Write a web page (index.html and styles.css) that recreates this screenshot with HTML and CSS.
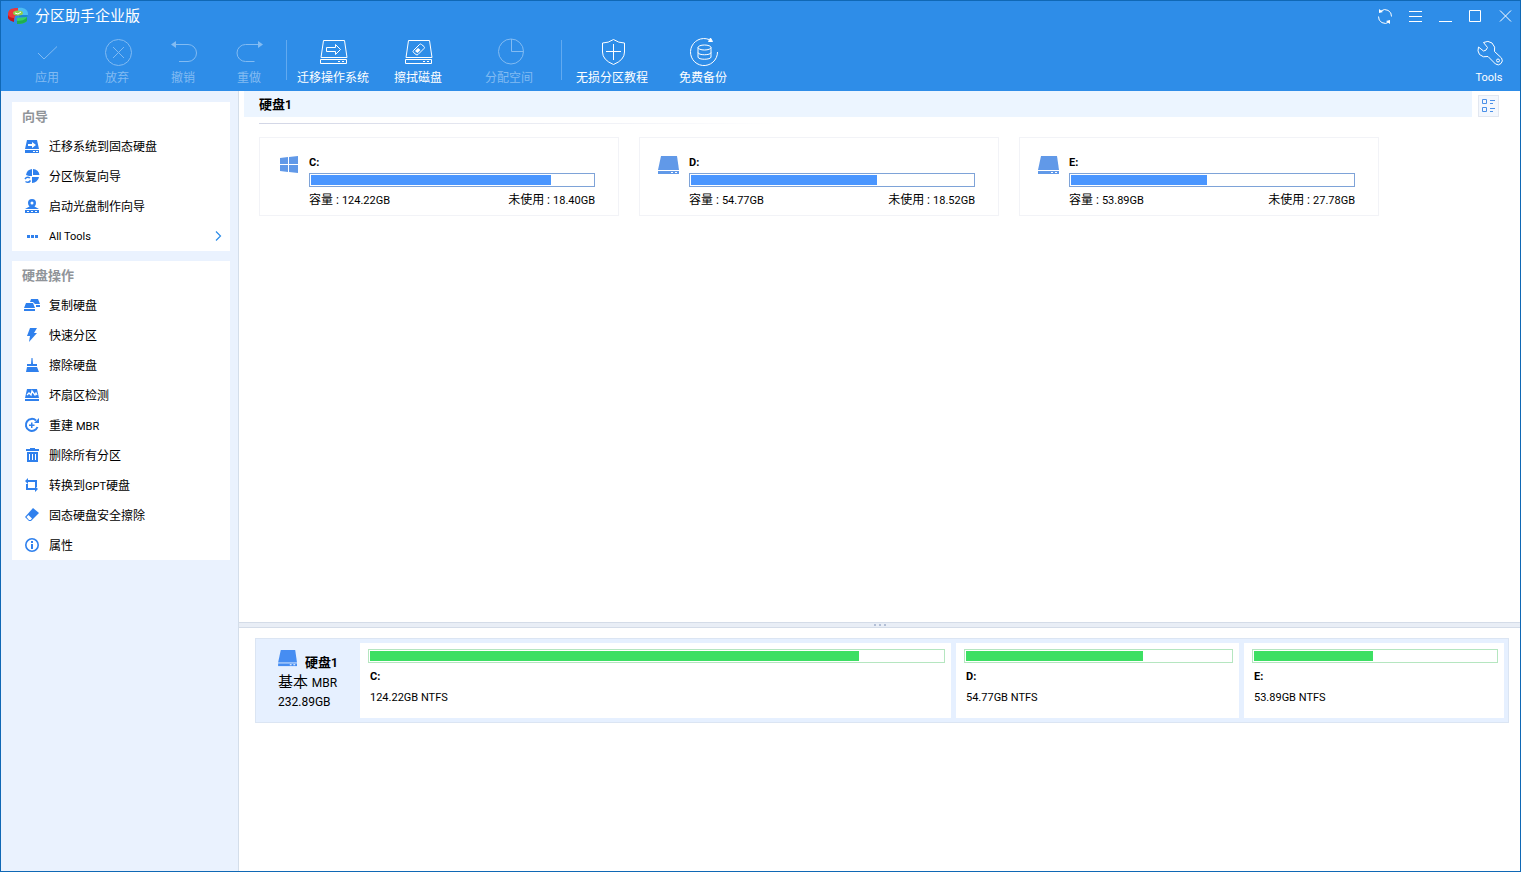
FILE: index.html
```html
<!DOCTYPE html>
<html lang="zh-CN">
<head>
<meta charset="utf-8">
<title>分区助手企业版</title>
<link rel="stylesheet" href="styles.css">
</head>
<body>
<svg class="defs" width="0" height="0" aria-hidden="true">
  <symbol id="drive" viewBox="0 0 22 20">
    <path d="M3 1h16l2 14H0z" fill="currentColor"/>
    <path d="M0 16h21v3H0z" fill="currentColor"/>
    <path d="M13 17h2v1h-2zM17 17h2v1h-2z" fill="#fff"/>
  </symbol>
</svg>
<div class="window">
  <header class="header">
    <div class="titlebar">
      <svg class="logo" width="22" height="18" viewBox="0 0 22 18">
        <path d="M11 1C17 0 21 3 21 7v2l-10-1z" fill="#4cbcf2"/>
        <path d="M12 8l9 0c0 1-1 2-2 2l-7 0z" fill="#1e86d0"/>
        <path d="M10 1C4 1 1 3 1 7v4c1 2 4 3 6 3l1-5 3-1V1z" fill="#e8383c"/>
        <path d="M1 8c1 2 3 3 6 3v4c-3-1-5-2-6-4z" fill="#c2141c"/>
        <path d="M10 11l10-1v4c-2 2-5 3-8 3h-2z" fill="#35d06a"/>
        <path d="M10 14c4 0 8-1 10-4v4c-2 2-5 3-10 3z" fill="#1fae50"/>
        <ellipse cx="11" cy="6" rx="5" ry="2.500" fill="#8fd14a"/>
        <path d="M8 6l3 1 3-2" fill="none" stroke="#fff"/>
      </svg>
      <h1 class="app-name">分区助手企业版</h1>
      <div class="window-controls">
        <button class="wc" aria-label="刷新"><svg width="16" height="16" viewBox="0 0 16 16"><g fill="none" stroke="#fff"><path d="M4 3a6.500 6.500 0 0 1 10.500 5.500"/><path d="M12 14A6.500 6.500 0 0 1 1.500 8.500"/></g><path d="M2 1l0 4 4-1zM13 16l0-4-4 1z" fill="#fff"/></svg></button>
        <button class="wc" aria-label="菜单"><svg width="14" height="14" viewBox="0 0 14 14"><path d="M1 2.500h13M1 7.500h13M1 12.500h13" stroke="#fff"/></svg></button>
        <button class="wc" aria-label="最小化"><svg width="14" height="14" viewBox="0 0 14 14"><path d="M1 12.500h13" stroke="#fff"/></svg></button>
        <button class="wc" aria-label="最大化"><svg width="14" height="14" viewBox="0 0 14 14"><path d="M1.500 1.500h11v11h-11z" fill="none" stroke="#fff"/></svg></button>
        <button class="wc" aria-label="关闭"><svg width="14" height="14" viewBox="0 0 14 14"><path d="M2 1.500l11 11M13 1.500l-11 11" stroke="#fff"/></svg></button>
      </div>
    </div>
    <nav class="toolbar">
      <button class="tool tool-first" disabled><svg width="30" height="30" viewBox="0 0 30 30"><path d="M6 16l6 6L25 9.500"/></svg><span>应用</span></button>
      <button class="tool tool-s" disabled><svg width="30" height="30" viewBox="0 0 30 30"><circle cx="16.500" cy="15.500" r="13"/><path d="M11 10l11 11M22 10l-11 11"/></svg><span>放弃</span></button>
      <button class="tool tool-s" disabled><svg width="30" height="30" viewBox="0 0 30 30"><path d="M6 7.500h14a8.500 8.500 0 0 1 0 17h-9"/><path d="M8 4v7L3 7.500z" fill="currentColor" stroke="none"/></svg><span>撤销</span></button>
      <button class="tool tool-s" disabled><svg width="30" height="30" viewBox="0 0 30 30"><path d="M25 7.500H11.500a8.500 8.500 0 0 0 0 17h9"/><path d="M24 4v7l5-3.500z" fill="currentColor" stroke="none"/></svg><span>重做</span></button>
      <i class="sep sep-gap"></i>
      <button class="tool tool-os"><svg width="30" height="30" viewBox="0 0 30 30"><path d="M5.500 3.500h21l2.500 17H3z"/><path d="M2.500 22.500h26v4h-26zM20 24.500h2M24 24.500h2"/><path d="M8.500 10.500h9v-3l5 5-5 5v-3h-9z"/></svg><span>迁移操作系统</span></button>
      <button class="tool tool-wipe"><svg width="30" height="30" viewBox="0 0 30 30"><path d="M5.500 3.500h21l2.500 17H3z"/><path d="M2.500 22.500h26v4h-26zM20 24.500h2M24 24.500h2"/><path d="M16.500 7.500q1-1 2 0l2.500 2q1 1 0 2l-6 6q-1 1-2 0l-2.500-2q-1-1 0-2z"/><path d="M15 11l2.500 2-3 3-2.500-2z" fill="currentColor" stroke="none"/></svg><span>擦拭磁盘</span></button>
      <button class="tool tool-alloc" disabled><svg width="30" height="30" viewBox="0 0 30 30"><circle cx="17" cy="14.500" r="12.500"/><path d="M17.500 2v12.500h12"/></svg><span>分配空间</span></button>
      <i class="sep"></i>
      <button class="tool tool-guide"><svg width="30" height="30" viewBox="0 0 30 30"><path d="M16.500 2.500q5 3.500 11 3.500v9q0 8-11 12.500Q5.500 23 5.500 15V6q6 0 11-3.500z"/><path d="M16.500 7v16M9 14.500h15"/></svg><span>无损分区教程</span></button>
      <button class="tool tool-backup"><svg width="30" height="30" viewBox="0 0 30 30"><path d="M21 2.500A13.500 13.500 0 1 0 29.500 15"/><path d="M20.500 4.500l2-3.500 2 3.500z" fill="currentColor"/><ellipse cx="16.500" cy="10.500" rx="6.500" ry="2.500"/><path d="M10 10.500v9.500c0 3 13 3 13 0v-9.500M10 15.500c0 3 13 3 13 0"/></svg><span>免费备份</span></button>
      <button class="tool tool-right"><svg width="30" height="30" viewBox="0 0 30 30"><path d="M9.500 5.500Q14 3 18 6q4 4 2.500 8.500l7 6.500q2 3-.5 5.500t-5.500.5L14 19.500q-5 1.500-8.500-2Q3 14 4.500 10l5 4q3 0 4-3.500z"/><circle cx="24" cy="23.500" r="1.500"/></svg><span class="latin">Tools</span></button>
    </nav>
  </header>

  <div class="content">
    <aside class="sidebar">
      <section class="panel">
        <h2 class="panel-title">向导</h2>
        <button class="item"><svg class="ic" width="16" height="16" viewBox="0 0 16 16"><path d="M3 2h10l2 9H1zM1 12h14v3H1z"/><path d="M4 6h4V4l4 3-4 3V8H4zM9 13h2v1H9zM12 13h2v1h-2z" fill="#fff"/></svg>迁移系统到固态硬盘</button>
        <button class="item"><svg class="ic" width="16" height="16" viewBox="0 0 16 16"><path d="M9 1v6h6.500A6.500 6.500 0 0 0 9 1zM8 8V1a7 7 0 0 0-6 6l3 1zM8 9v6a7 7 0 0 0 7-6z"/><path d="M1 11q2-3 5-1M6.500 12.500q-2 3-5 1" fill="none" stroke="#2f80ed" stroke-width="1.500"/></svg>分区恢复向导</button>
        <button class="item"><svg class="ic" width="16" height="16" viewBox="0 0 16 16"><path d="M4 5a4 4 0 1 1 8 0q0 2-1.500 3.500L15 11H1l4.500-2.500Q4 7 4 5zM1 12h14v3H1z"/><circle cx="8" cy="5" r="1.500" fill="#fff"/><path d="M3 13h2v1H3zM7 13h2v1H7zM11 13h2v1h-2z" fill="#fff"/></svg>启动光盘制作向导</button>
        <button class="item"><svg class="ic" width="16" height="16" viewBox="0 0 16 16"><path d="M3 7h3v3H3zM7 7h3v3H7zM11 7h3v3h-3z"/></svg><span class="latin">All Tools</span><svg class="chev" width="8" height="10" viewBox="0 0 8 10"><path d="M2 .5l4.500 4.500L2 9.500" fill="none" stroke="#2b8ce8" stroke-width="1.200"/></svg></button>
      </section>
      <section class="panel">
        <h2 class="panel-title">硬盘操作</h2>
        <button class="item"><svg class="ic" width="16" height="16" viewBox="0 0 16 16"><path d="M7 2h7l2 5h-5L9 5H6zM12 8h4v2h-4zM2 6h7l2 5H0zM0 12h11v2H0z"/></svg>复制硬盘</button>
        <button class="item"><svg class="ic" width="16" height="16" viewBox="0 0 16 16"><path d="M6 1h7l-3 5h3L5 15l1-6H3z"/></svg>快速分区</button>
        <button class="item"><svg class="ic" width="16" height="16" viewBox="0 0 16 16"><path d="M7.500 1h1l.5 6h4v2H3V7h4zM3 10h10l2 5H2z"/></svg>擦除硬盘</button>
        <button class="item"><svg class="ic" width="16" height="16" viewBox="0 0 16 16"><path d="M3 2h10l2 9H1zM1 12h14v2H1z"/><path d="M3 8l2-2 2 2 1-4 3 4 1-2 1 2" fill="none" stroke="#fff" stroke-width="1.300"/></svg>坏扇区检测</button>
        <button class="item"><svg class="ic" width="16" height="16" viewBox="0 0 16 16"><path d="M12 3.500A6 6 0 1 0 13.500 10" fill="none" stroke="#2f80ed" stroke-width="2"/><path d="M15 1v5h-5zM7 5.500h1.500V7.500h2V9h-2v2H7V9H5V7.500h2z"/></svg><span>重建 <span class="latin">MBR</span></span></button>
        <button class="item"><svg class="ic" width="16" height="16" viewBox="0 0 16 16"><path d="M6 1h5v1h4v2H2V2h4zM3 5h11v10H3z"/><path d="M5.500 7v6M8.500 7v6M11.500 7v6" stroke="#fff"/></svg>删除所有分区</button>
        <button class="item"><svg class="ic" width="16" height="16" viewBox="0 0 16 16"><path d="M4 3h9v7h-2V5H4v2L1 4l3-3zM2 7h2v4h7V9l3 3-3 3v-2H2z"/></svg><span>转换到<span class="latin">GPT</span>硬盘</span></button>
        <button class="item"><svg class="ic" width="16" height="16" viewBox="0 0 16 16"><path d="M9 1l6 5-8 8H5L1 10z"/><path d="M4.500 8l3.500 3.500-1.500 1.500H5L2.500 10z" fill="#fff"/></svg>固态硬盘安全擦除</button>
        <button class="item"><svg class="ic" width="16" height="16" viewBox="0 0 16 16"><circle cx="8" cy="8" r="6.200" fill="none" stroke="#2f80ed" stroke-width="1.600"/><path d="M7 4h2v2H7zM7 7h2v5H7z"/></svg>属性</button>
      </section>
    </aside>

    <main class="main">
      <section class="volumes">
        <div class="disk-head">
          <h2 class="disk-name">硬盘<span class="num">1</span></h2>
          <button class="view-btn" aria-label="视图"><svg width="13" height="14" viewBox="0 0 13 14"><path d="M.5 .5h4v4h-4zM.5 8.500h4v4h-4zM8 1.500h5M8 4.500h3M8 9.500h5M8 12.500h3" fill="none" stroke="#4a90e8"/></svg></button>
        </div>
        <div class="rule"></div>
        <div class="cards">
          <article class="card">
            <svg class="card-icon" width="22" height="20" viewBox="0 0 22 20"><path d="M2 3l8-1v7H2zM11 2l9-1v8h-9zM2 10h8v7l-8-1zM11 10h9v8l-9-1z" fill="#6199e8"/></svg>
            <div class="card-body">
              <h3 class="letter">C:</h3>
              <div class="bar"><div class="fill" style="width:85.1%"></div></div>
              <p class="stats"><span>容量 : <span class="latin">124.22GB</span></span><span>未使用 : <span class="latin">18.40GB</span></span></p>
            </div>
          </article>
          <article class="card">
            <svg class="card-icon" width="22" height="20"><use href="#drive"/></svg>
            <div class="card-body">
              <h3 class="letter">D:</h3>
              <div class="bar"><div class="fill" style="width:66%"></div></div>
              <p class="stats"><span>容量 : <span class="latin">54.77GB</span></span><span>未使用 : <span class="latin">18.52GB</span></span></p>
            </div>
          </article>
          <article class="card">
            <svg class="card-icon" width="22" height="20"><use href="#drive"/></svg>
            <div class="card-body">
              <h3 class="letter">E:</h3>
              <div class="bar"><div class="fill" style="width:48.4%"></div></div>
              <p class="stats"><span>容量 : <span class="latin">53.89GB</span></span><span>未使用 : <span class="latin">27.78GB</span></span></p>
            </div>
          </article>
        </div>
      </section>

      <div class="splitter"><i></i><i></i><i></i></div>

      <section class="map">
        <div class="disk">
          <div class="summary">
            <div class="summary-head"><svg class="summary-icon" width="20" height="18" viewBox="0 0 22 20"><use href="#drive"/></svg><h2 class="disk-name">硬盘<span class="num">1</span></h2></div>
            <p class="kind">基本 <span class="num">MBR</span></p>
            <p class="size">232.89GB</p>
          </div>
          <div class="part" style="flex-grow:577">
            <div class="bar green"><div class="fill" style="width:85.3%"></div></div>
            <h3 class="letter">C:</h3>
            <p class="fs">124.22GB NTFS</p>
          </div>
          <div class="part" style="flex-grow:269">
            <div class="bar green"><div class="fill" style="width:66.8%"></div></div>
            <h3 class="letter">D:</h3>
            <p class="fs">54.77GB NTFS</p>
          </div>
          <div class="part" style="flex-grow:246">
            <div class="bar green"><div class="fill" style="width:49.2%"></div></div>
            <h3 class="letter">E:</h3>
            <p class="fs">53.89GB NTFS</p>
          </div>
        </div>
      </section>
    </main>
  </div>
</div>
</body>
</html>
```
FILE: styles.css
```css
* { box-sizing: border-box; }

html, body { height: 100%; margin: 0; }

body {
  font: 12px/16px Roboto, "Noto Sans CJK SC", sans-serif;
  color: #000;
}

h1, h2, h3, p { margin: 0; font-weight: 400; }

button {
  margin: 0;
  padding: 0;
  border: 0;
  background: none;
  color: inherit;
  font: inherit;
}

.defs { position: absolute; }
.latin { font-size: 11px; }
.num { font-size: 12px; }

.window {
  display: flex;
  flex-direction: column;
  min-height: 100%;
  border: 1px solid #1068b5;
  background: #fff;
}

/* Header */
.header { background: #2e8de8; color: #fff; }

.titlebar {
  display: flex;
  align-items: center;
  height: 30px;
  padding-left: 6px;
}

.app-name { margin-left: 6px; font-size: 15px; line-height: 20px; }
.window-controls { display: flex; margin-left: auto; }

.wc {
  display: flex;
  align-items: center;
  justify-content: center;
  width: 30px;
  height: 30px;
}

.toolbar { display: flex; height: 60px; padding-left: 9px; }

.tool {
  display: flex;
  flex-direction: column;
  align-items: center;
  gap: 3px;
  padding-top: 6px;
  white-space: nowrap;
}

.tool svg { flex: none; fill: none; stroke: currentColor; }
.tool:disabled { color: #82bbf2; }
.tool-first { width: 74px; }
.tool-s { width: 66px; }
.tool-os { width: 92px; }
.tool-wipe { width: 78px; }
.tool-alloc { width: 104px; }
.tool-guide { width: 100px; }
.tool-backup { width: 82px; }
.tool-right { width: 62px; margin-left: auto; }

.sep { width: 1px; height: 40px; margin-top: 9px; background: #62aaf0; }
.sep-gap { margin-left: 4px; }

/* Sidebar */
.content { display: flex; flex: 1; }

.sidebar {
  display: flex;
  flex: none;
  flex-direction: column;
  gap: 10px;
  width: 238px;
  padding: 11px 8px 11px 11px;
  border-right: 1px solid #d4deea;
  background: #eaf2fe;
}

.panel { background: #fff; }

.panel-title {
  padding: 7px 10px 6px;
  color: #909499;
  font-size: 13px;
  font-weight: 700;
}

.item {
  display: flex;
  align-items: center;
  width: 100%;
  height: 30px;
  padding: 2px 8px 0 12px;
  text-align: left;
}

.ic { flex: none; margin: 0 9px 2px 0; fill: #2f80ed; }
.chev { margin: 0 0 2px auto; }

/* Volume list */
.main { display: flex; flex: 1; flex-direction: column; min-width: 0; }
.volumes { flex: 1; }

.disk-head {
  display: flex;
  align-items: flex-start;
  gap: 6px;
  padding: 0 21px 0 5px;
}

.disk-name { font-size: 13px; font-weight: 700; }

.disk-head .disk-name { flex: 1; padding: 6px 15px 4px; background: #ecf5ff; }

.view-btn {
  display: flex;
  align-items: center;
  justify-content: center;
  width: 21px;
  height: 22px;
  margin-top: 4px;
  border: 1px solid #e2e7f0;
  background: #f3f7fd;
}

.rule {
  height: 1px;
  margin: 6px 20px 0;
  background: linear-gradient(to right, #d2d6e6, #fff 520px);
}

.cards { display: flex; flex-wrap: wrap; gap: 20px; padding: 13px 20px; }

.card {
  display: flex;
  width: 360px;
  padding: 17px 23px 6px 18px;
  border: 1px solid #f2f3f7;
}

.card-icon { flex: none; margin-right: 9px; color: #6199e8; }
.card-body { flex: 1; }

.letter { font-size: 11px; font-weight: 700; }

.bar {
  height: 14px;
  padding: 1px;
  border: 1px solid #7ea3d8;
  background: #fff;
}

.fill { height: 100%; background: #4a96ff; }
.card .bar { margin-top: 2px; }
.stats { display: flex; justify-content: space-between; margin-top: 5px; }

/* Splitter */
.splitter {
  display: flex;
  align-items: center;
  justify-content: center;
  gap: 3px;
  height: 6px;
  border: solid #d4dce8;
  border-width: 1px 0;
  background: #e9eef6;
}

.splitter i { width: 2px; height: 2px; background: #b3bfd6; }

/* Disk map */
.map { height: 243px; padding: 10px 11px 0 16px; }

.disk {
  display: flex;
  gap: 5px;
  padding: 4px;
  border: 1px solid #dbe5f3;
  background: #e6f0ff;
}

.summary { flex: none; width: 95px; padding: 6px 0 0 18px; white-space: nowrap; }
.summary-head { display: flex; align-items: flex-start; gap: 7px; }
.summary-head .disk-name { padding-top: 6px; }
.summary-icon { flex: none; color: #468df2; }
.kind { margin-top: 1px; font-size: 15px; line-height: 20px; }
.size { line-height: 18px; }

.part {
  flex: 1 1 0;
  min-width: 0;
  padding: 6px 6px 12px 8px;
  background: #fff;
}

.green { border-color: #b5e6c0; }
.green .fill { background: #3ddf63; }
.part .letter { margin-top: 6px; padding-left: 2px; }
.fs { margin-top: 5px; padding-left: 2px; font-size: 11px; }
```
